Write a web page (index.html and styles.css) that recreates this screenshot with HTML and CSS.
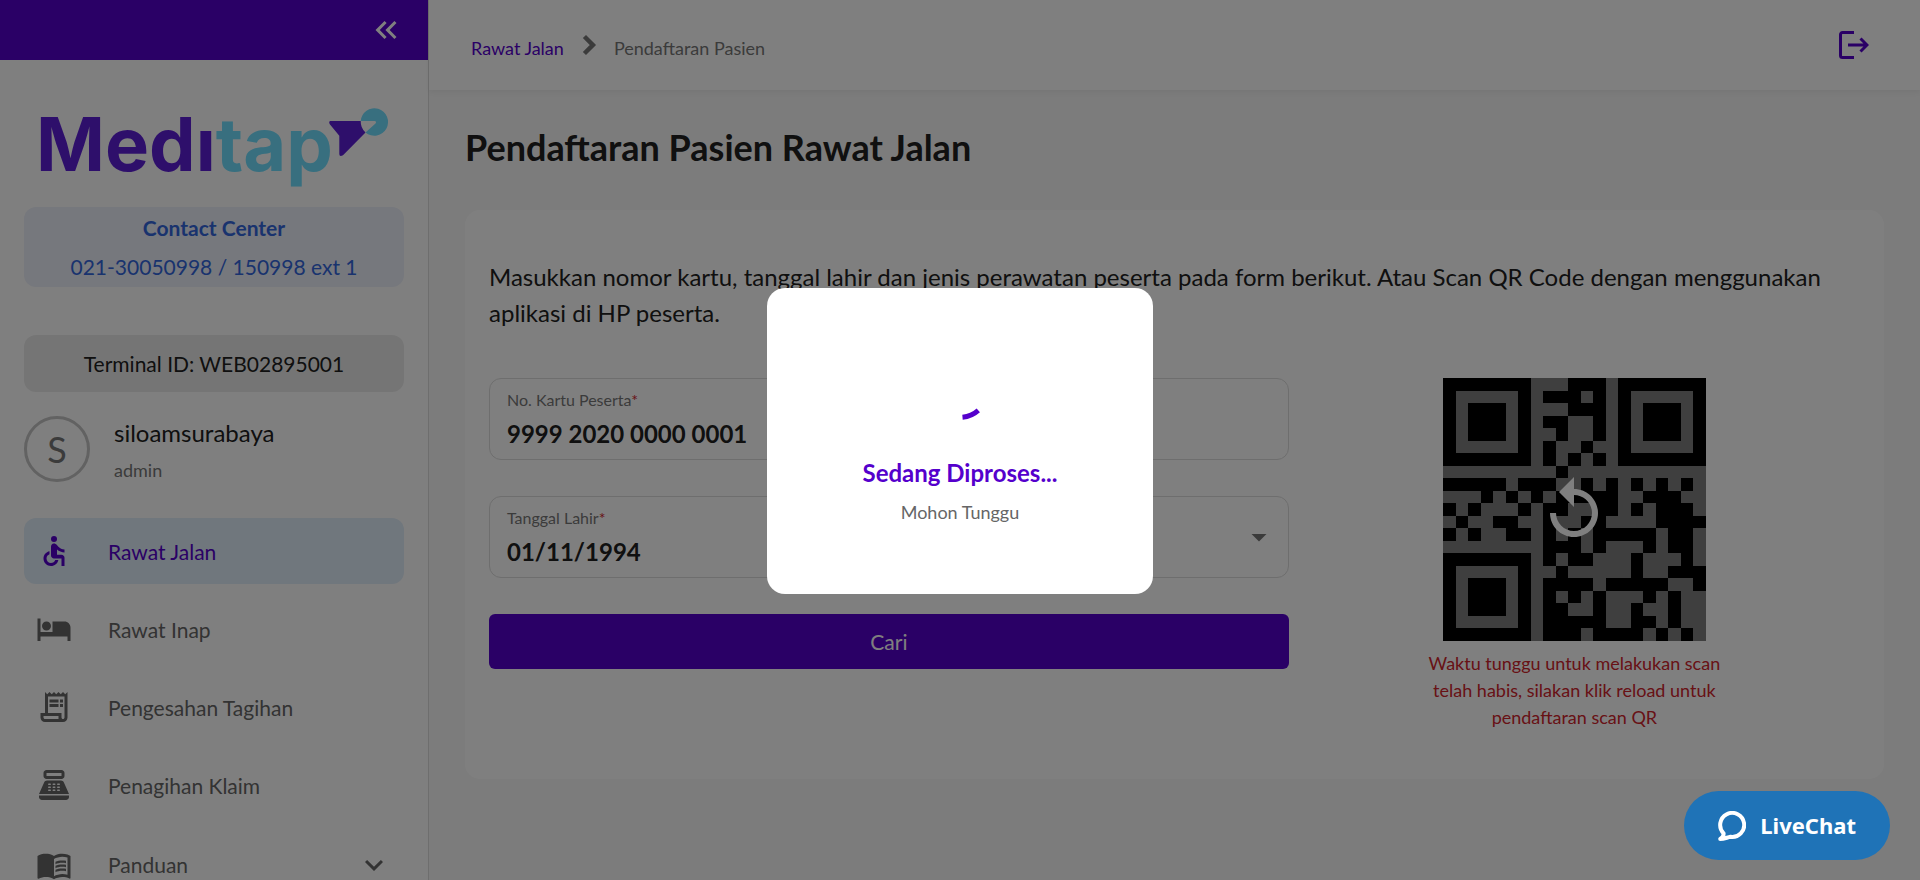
FILE: index.html
```html
<!DOCTYPE html>
<html lang="id">
<head>
<meta charset="utf-8">
<meta name="viewport" content="width=device-width, initial-scale=1">
<title>Pendaftaran Pasien Rawat Jalan</title>
<link rel="stylesheet" href="styles.css">
</head>
<body>
<div class="layout">
  <aside class="sidebar">
    <div class="sidebar-top">
      <button class="icon-button" type="button" aria-label="Tutup menu">
        <svg class="icon" viewBox="0 0 24 24"><path d="M17.59 18 19 16.59 14.42 12 19 7.41 17.59 6l-6 6zM11 18l1.41-1.41L7.83 12l4.58-4.59L11 6l-6 6z"/></svg>
      </button>
    </div>
    <div class="sidebar-body">
      <svg class="logo" viewBox="0 0 348 80" role="img" aria-label="Meditap">
        <text class="logo-text" x="-4" y="63"><tspan class="logo-purple">Medı</tspan><tspan class="logo-teal">tap</tspan></text>
        <path class="logo-purple" d="M290 13H320.700Q320.500 20 325.500 24.400L303 47.200Q299.300 49 299.300 46V27.700L289.600 16Q288.500 13.500 290 13Z"/>
        <path class="logo-teal" d="M320.700 13H334.500Q337 13.500 335.500 15.500L325.500 24.400A13.700 13.700 0 1 0 320.700 13Z"/>
      </svg>
      <div class="contact">
        <strong>Contact Center</strong>
        <span>021-30050998 / 150998 ext 1</span>
      </div>
      <div class="terminal">Terminal ID: WEB02895001</div>
      <div class="user">
        <div class="avatar">S</div>
        <div class="user-text">
          <span class="user-name">siloamsurabaya</span>
          <span class="user-role">admin</span>
        </div>
      </div>
      <nav class="nav">
        <a class="nav-item nav-active" href="#rawat-jalan">
          <svg class="icon" viewBox="0 0 24 24"><circle cx="12" cy="4" r="2"/><path d="M19 13v-2c-1.540.020-3.090-.750-4.070-1.830l-1.290-1.430c-.170-.190-.380-.340-.610-.450-.010 0-.010-.010-.020-.010H13c-.350-.200-.750-.300-1.190-.260C10.760 7.110 10 8.040 10 9.090V15c0 1.100.900 2 2 2h5v5h2v-5.500c0-1.100-.900-2-2-2h-3v-3.450c1.290 1.070 3.250 1.940 5 1.950zm-6.170 5c-.410 1.160-1.520 2-2.830 2-1.660 0-3-1.340-3-3 0-1.310.840-2.410 2-2.830V12.100c-2.280.460-4 2.480-4 4.900 0 2.760 2.240 5 5 5 2.420 0 4.440-1.720 4.900-4h-2.070z"/></svg>
          <span>Rawat Jalan</span>
        </a>
        <a class="nav-item" href="#rawat-inap">
          <svg class="icon" viewBox="0 0 24 24"><path d="M7 13c1.660 0 3-1.340 3-3S8.660 7 7 7s-3 1.340-3 3 1.340 3 3 3zm12-6h-8v7H3V5H1v15h2v-3h18v3h2v-9c0-2.210-1.790-4-4-4z"/></svg>
          <span>Rawat Inap</span>
        </a>
        <a class="nav-item" href="#pengesahan">
          <svg class="icon" viewBox="0 0 24 24"><path d="M19.500 3.500 18 2l-1.500 1.500L15 2l-1.500 1.500L12 2l-1.500 1.500L9 2 7.500 3.500 6 2v14H3v3c0 1.660 1.340 3 3 3h12c1.660 0 3-1.340 3-3V2l-1.500 1.500zM15 20H6c-.550 0-1-.450-1-1v-1h10v2zm4-1c0 .550-.450 1-1 1s-1-.450-1-1v-3H8V5h11v14z"/><path d="M9 7h6v2H9zM16 7h2v2h-2zM9 10h6v2H9zM16 10h2v2h-2z"/></svg>
          <span>Pengesahan Tagihan</span>
        </a>
        <a class="nav-item" href="#penagihan">
          <svg class="icon" viewBox="0 0 24 24"><path fill-rule="evenodd" d="M17 2H7c-1.100 0-2 .900-2 2v2c0 1.100.900 2 2 2h10c1.100 0 2-.900 2-2V4c0-1.100-.900-2-2-2zm0 4H7V4h10v2zM20 22H4c-1.100 0-2-.900-2-2v-1h20v1c0 1.100-.900 2-2 2zM18.530 10.190C18.210 9.470 17.490 9 16.700 9H7.300c-.790 0-1.510.470-1.830 1.190L2 18h20zM8.500 11h1a.5.5 0 0 1 0 1h-1a.5.5 0 0 1 0-1zM11.500 11h1a.5.5 0 0 1 0 1h-1a.5.5 0 0 1 0-1zM14.500 11h1a.5.5 0 0 1 0 1h-1a.5.5 0 0 1 0-1zM8.500 13h1a.5.5 0 0 1 0 1h-1a.5.5 0 0 1 0-1zM11.500 13h1a.5.5 0 0 1 0 1h-1a.5.5 0 0 1 0-1zM14.500 13h1a.5.5 0 0 1 0 1h-1a.5.5 0 0 1 0-1zM8.500 15h1a.5.5 0 0 1 0 1h-1a.5.5 0 0 1 0-1zM11.500 15h1a.5.5 0 0 1 0 1h-1a.5.5 0 0 1 0-1zM14.500 15h1a.5.5 0 0 1 0 1h-1a.5.5 0 0 1 0-1z"/></svg>
          <span>Penagihan Klaim</span>
        </a>
        <button class="nav-item nav-group" type="button" aria-expanded="false">
          <svg class="icon" viewBox="0 0 24 24"><path d="M21 5c-1.110-.350-2.330-.500-3.500-.500-1.950 0-4.050.400-5.500 1.500-1.450-1.100-3.550-1.500-5.500-1.500S2.450 4.900 1 6v14.650c0 .250.250.500.500.500.100 0 .150-.050.250-.050C3.100 20.450 5.050 20 6.500 20c1.950 0 4.050.400 5.500 1.500 1.350-.850 3.800-1.500 5.500-1.500 1.650 0 3.350.300 4.750 1.050.100.050.150.050.250.050.250 0 .500-.250.500-.500V6c-.600-.450-1.250-.750-2-1zm0 13.500c-1.100-.350-2.300-.500-3.500-.500-1.700 0-4.150.650-5.500 1.500V8c1.350-.850 3.800-1.500 5.500-1.500 1.200 0 2.400.150 3.500.500v11.500z"/><path d="M17.500 10.500c.880 0 1.730.090 2.500.260V9.240c-.790-.150-1.640-.240-2.500-.240-1.700 0-3.240.290-4.500.830v1.660c1.130-.640 2.700-.990 4.500-.990zM13 12.490v1.660c1.130-.640 2.700-.990 4.500-.990.880 0 1.730.090 2.500.260V11.900c-.790-.150-1.640-.240-2.500-.240-1.700 0-3.240.300-4.500.830zM17.500 14.330c-1.700 0-3.240.290-4.500.830v1.660c1.130-.640 2.700-.990 4.500-.990.880 0 1.730.090 2.500.260v-1.520c-.790-.160-1.640-.240-2.500-.240z"/></svg>
          <span class="nav-label">Panduan</span>
          <svg class="icon" viewBox="0 0 24 24"><path d="M16.590 8.590 12 13.170 7.410 8.590 6 10l6 6 6-6z"/></svg>
        </button>
      </nav>
    </div>
  </aside>

  <div class="content">
    <header class="topbar">
      <nav class="breadcrumb" aria-label="Breadcrumb">
        <a href="#rawat-jalan">Rawat Jalan</a>
        <svg class="icon icon-bold" viewBox="0 0 24 24"><path d="M10 6 8.590 7.410 13.170 12l-4.580 4.590L10 18l6-6z"/></svg>
        <span>Pendaftaran Pasien</span>
      </nav>
      <button class="icon-button logout" type="button" aria-label="Keluar">
        <svg class="logout-icon" viewBox="0 0 30 28"><path d="M15 1.500H3.500a2 2 0 0 0-2 2v21a2 2 0 0 0 2 2H15M9 14h18M21.500 7.500 28 14l-6.500 6.500"/></svg>
      </button>
    </header>

    <main class="main">
      <h1 class="title">Pendaftaran Pasien Rawat Jalan</h1>
      <section class="card">
        <p class="intro">Masukkan nomor kartu, tanggal lahir dan jenis perawatan peserta pada form berikut. Atau Scan QR Code dengan menggunakan aplikasi di HP peserta.</p>
        <div class="columns">
          <form class="form">
            <div class="field">
              <div class="field-text">
                <label for="card-number">No. Kartu Peserta<span class="required">*</span></label>
                <input id="card-number" type="text" value="9999 2020 0000 0001">
              </div>
            </div>
            <div class="field">
              <div class="field-text">
                <label for="birth-date">Tanggal Lahir<span class="required">*</span></label>
                <input id="birth-date" type="text" value="01/11/1994">
              </div>
              <button class="icon-button" type="button" aria-label="Pilih tanggal">
                <svg class="icon" viewBox="0 0 24 24"><path d="m7 10 5 5 5-5z"/></svg>
              </button>
            </div>
            <button class="submit" type="button">Cari</button>
          </form>
          <div class="scan">
            <div class="qr">
              <svg class="qr-code" viewBox="0 0 21 21" role="img" aria-label="QR Code"><path d="M0 .5h7M10 .5h3M14 .5h7
M0 1.500h1M6 1.500h1M8 1.500h3M12 1.500h1M14 1.500h1M20 1.500h1
M0 2.500h1M2 2.500h3M6 2.500h1M10 2.500h3M14 2.500h1M16 2.500h3M20 2.500h1
M0 3.500h1M2 3.500h3M6 3.500h1M8 3.500h2M12 3.500h1M14 3.500h1M16 3.500h3M20 3.500h1
M0 4.500h1M2 4.500h3M6 4.500h1M9 4.500h1M12 4.500h1M14 4.500h1M16 4.500h3M20 4.500h1
M0 5.500h1M6 5.500h1M8 5.500h1M11 5.500h1M14 5.500h1M20 5.500h1
M0 6.500h7M8 6.500h1M10 6.500h1M12 6.500h1M14 6.500h7
M9 7.500h1
M0 8.500h5M6 8.500h3M11 8.500h1M13 8.500h1M15 8.500h1M17 8.500h1M19 8.500h1
M3 9.500h1M5 9.500h1M7 9.500h1M9 9.500h5M16 9.500h3
M0 10.500h1M2 10.500h1M6 10.500h1M8 10.500h2M12 10.500h2M15 10.500h1M17 10.500h3
M1 11.500h1M4 11.500h2M8 11.500h1M11 11.500h2M17 11.500h4
M0 12.500h1M2 12.500h1M5 12.500h2M8 12.500h1M10 12.500h1M12 12.500h5M18 12.500h2
M8 13.500h3M12 13.500h1M16 13.500h1M18 13.500h2
M0 14.500h7M8 14.500h1M10 14.500h2M15 14.500h1M19 14.500h1
M0 15.500h1M6 15.500h1M9 15.500h1M15 15.500h1M18 15.500h3
M0 16.500h1M2 16.500h3M6 16.500h1M8 16.500h4M13 16.500h5M20 16.500h1
M0 17.500h1M2 17.500h3M6 17.500h1M8 17.500h1M10 17.500h1M12 17.500h1M16 17.500h1M18 17.500h1
M0 18.500h1M2 18.500h3M6 18.500h1M8 18.500h2M12 18.500h1M15 18.500h1M18 18.500h1
M0 19.500h1M6 19.500h1M8 19.500h5M15 19.500h2M18 19.500h1
M0 20.500h7M8 20.500h3M12 20.500h4M17 20.500h1M19 20.500h1"/></svg>
              <button class="icon-button qr-reload" type="button" aria-label="Reload QR">
                <svg class="reload-icon" viewBox="0 0 24 24"><path d="M12 5V1L7 6l5 5V7c3.310 0 6 2.690 6 6s-2.690 6-6 6-6-2.690-6-6H4c0 4.420 3.580 8 8 8s8-3.580 8-8-3.580-8-8-8z"/></svg>
              </button>
            </div>
            <p class="scan-note">Waktu tunggu untuk melakukan scan telah habis, silakan klik reload untuk pendaftaran scan QR</p>
          </div>
        </div>
      </section>
    </main>
  </div>
</div>

<div class="backdrop">
  <div class="dialog" role="dialog" aria-labelledby="dialog-title">
    <svg class="spinner" viewBox="0 0 60 60"><path d="M32.500 57.200A27.300 27.300 0 0 0 48.300 50.300"/></svg>
    <h2 class="dialog-title" id="dialog-title">Sedang Diproses...</h2>
    <p class="dialog-note">Mohon Tunggu</p>
  </div>
</div>

<button class="chat" type="button">
  <svg class="chat-icon" viewBox="0 0 28 30"><path d="M5.600 22.300A12 12 0 1 1 12.500 25.800C9 26.500 6 28 2.200 28 4.500 26.500 5.800 25 5.600 22.300Z"/></svg>
  <span>LiveChat</span>
</button>
</body>
</html>
```
FILE: styles.css
```css
* {
  box-sizing: border-box;
}

body {
  margin: 0;
  font-family: Lato, "Noto Sans", sans-serif;
  font-size: 18px;
  line-height: 27px;
  color: #202020;
}

h1, h2, p {
  margin: 0;
}

button, input {
  font: inherit;
  color: inherit;
  border: 0;
  padding: 0;
  background: none;
}

a {
  color: inherit;
  text-decoration: none;
}

.icon {
  display: block;
  flex: none;
  width: 36px;
  height: 36px;
  fill: currentColor;
}

.icon-bold {
  stroke: currentColor;
  stroke-width: 1;
}

.icon-button {
  display: block;
  flex: none;
  cursor: pointer;
}

.layout {
  display: flex;
  height: 100vh;
  overflow: hidden;
}

/* Sidebar */
.sidebar {
  flex: none;
  width: 429px;
  overflow: hidden;
  background: #fff;
  border-right: 1px solid #dcdcdc;
}

.sidebar-top {
  display: flex;
  align-items: center;
  justify-content: flex-end;
  height: 60px;
  padding: 0 24px;
  background: #5500cc;
  color: #fff;
}

.sidebar-body {
  padding: 48px 24px 24px;
}

.logo {
  display: block;
  width: 348px;
  height: 80px;
  margin: 0 16px 19px;
  overflow: visible;
}

.logo-text {
  font-family: Inter, sans-serif;
  font-size: 74px;
  font-weight: 700;
}

.logo-purple {
  fill: #5c1ed6;
}

.logo-teal {
  fill: #70deff;
}

.contact {
  display: flex;
  flex-direction: column;
  justify-content: center;
  min-height: 80px;
  border-radius: 12px;
  background: #edf0fa;
  color: #3366dd;
  font-size: 21px;
  line-height: 39px;
  text-align: center;
}

.terminal {
  margin: 48px 0 24px;
  padding: 12px;
  border-radius: 12px;
  background: #ebebeb;
  font-size: 21px;
  line-height: 33px;
  text-align: center;
}

.user {
  display: flex;
  align-items: center;
  gap: 24px;
  margin-bottom: 36px;
}

.avatar {
  flex: none;
  width: 66px;
  height: 66px;
  border: 3px solid #c4c4c4;
  border-radius: 50%;
  color: #777;
  font-size: 36px;
  line-height: 60px;
  text-align: center;
}

.user-text {
  display: flex;
  flex-direction: column;
  gap: 9px;
}

.user-name {
  font-size: 24px;
  line-height: 33px;
}

.user-role {
  color: #777;
  line-height: 24px;
}

.nav {
  display: flex;
  flex-direction: column;
  gap: 12px;
}

.nav-item {
  display: flex;
  align-items: center;
  gap: 36px;
  min-height: 66px;
  padding: 0 12px;
  border-radius: 12px;
  color: #666;
  font-size: 21px;
  text-align: left;
}

.nav-active {
  background: #e1eefa;
  color: #5500cc;
}

.nav-group {
  min-height: 69px;
}

.nav-label {
  flex: 1;
}

/* Content */
.content {
  flex: 1;
  min-width: 0;
  display: flex;
  flex-direction: column;
  background: #f8f8f8;
}

.topbar {
  display: flex;
  align-items: center;
  justify-content: space-between;
  height: 90px;
  padding: 0 51px 0 42px;
  background: #fff;
  box-shadow: 0 2px 6px rgba(0, 0, 0, .06);
}

.breadcrumb {
  display: flex;
  align-items: flex-start;
  gap: 7px;
  height: 36px;
  color: #777;
  line-height: 42px;
}

.breadcrumb a {
  color: #5500cc;
}

.logout-icon {
  display: block;
  width: 30px;
  height: 28px;
  fill: none;
  stroke: #5500cc;
  stroke-width: 3;
}

.main {
  padding: 30px 36px;
}

.title {
  margin-bottom: 36px;
  font-size: 36px;
  line-height: 54px;
  font-weight: 700;
}

.card {
  padding: 49px 24px 48px;
  border-radius: 15px;
  background: #fff;
}

.intro {
  margin-bottom: 47px;
  font-size: 24px;
  line-height: 36px;
}

.columns {
  display: grid;
  grid-template-columns: 7fr 5fr;
}

.form {
  display: flex;
  flex-direction: column;
  gap: 36px;
}

.field {
  display: flex;
  align-items: center;
  height: 82px;
  padding: 0 11px 0 17px;
  border: 1px solid #dcdcdc;
  border-radius: 12px;
  color: #777;
}

.field-text {
  flex: 1;
  display: flex;
  flex-direction: column;
}

.field label {
  font-size: 16px;
  line-height: 28px;
}

.required {
  color: #d0242c;
}

.field input {
  width: 100%;
  height: 38px;
  outline: 0;
  color: #202020;
  font-size: 24px;
  font-weight: 700;
}

.submit {
  height: 55px;
  border-radius: 6px;
  background: #5500cc;
  color: #fff;
  font-size: 21px;
}

.scan {
  display: flex;
  flex-direction: column;
  align-items: center;
  gap: 9px;
}

.qr {
  position: relative;
  background: #7f7f7f;
}

.qr-code {
  display: block;
  width: 263px;
  height: 263px;
  fill: none;
  stroke: #000;
  stroke-width: 1;
  shape-rendering: crispEdges;
}

.qr-reload {
  position: absolute;
  inset: 0;
  margin: auto;
  width: 72px;
  height: 72px;
  color: #fff;
}

.reload-icon {
  display: block;
  width: 72px;
  height: 72px;
  fill: currentColor;
}

.scan-note {
  max-width: 300px;
  color: #d0242c;
  text-align: center;
}

/* Loading dialog */
.backdrop {
  position: fixed;
  inset: 0;
  display: flex;
  align-items: center;
  justify-content: center;
  padding-top: 2px;
  background: rgba(0, 0, 0, .5);
}

.dialog {
  display: flex;
  flex-direction: column;
  align-items: center;
  width: 386px;
  padding: 72px 24px 68px;
  border-radius: 18px;
  background: #fff;
}

.spinner {
  width: 60px;
  height: 60px;
  margin-bottom: 35px;
  fill: none;
  stroke: #5500cc;
  stroke-width: 5;
}

.dialog-title {
  margin-bottom: 8px;
  color: #5500cc;
  font-size: 24px;
  line-height: 36px;
}

.dialog-note {
  color: #666;
}

/* Chat launcher */
.chat {
  position: fixed;
  right: 30px;
  bottom: 20px;
  display: flex;
  align-items: center;
  gap: 14px;
  height: 69px;
  padding: 0 34px;
  border-radius: 35px;
  background: #1f73b7;
  color: #fff;
  font-family: "Noto Sans", sans-serif;
  font-size: 22px;
  font-weight: 700;
}

.chat-icon {
  width: 28px;
  height: 30px;
  fill: none;
  stroke: #fff;
  stroke-width: 4;
  stroke-linejoin: round;
}
```
